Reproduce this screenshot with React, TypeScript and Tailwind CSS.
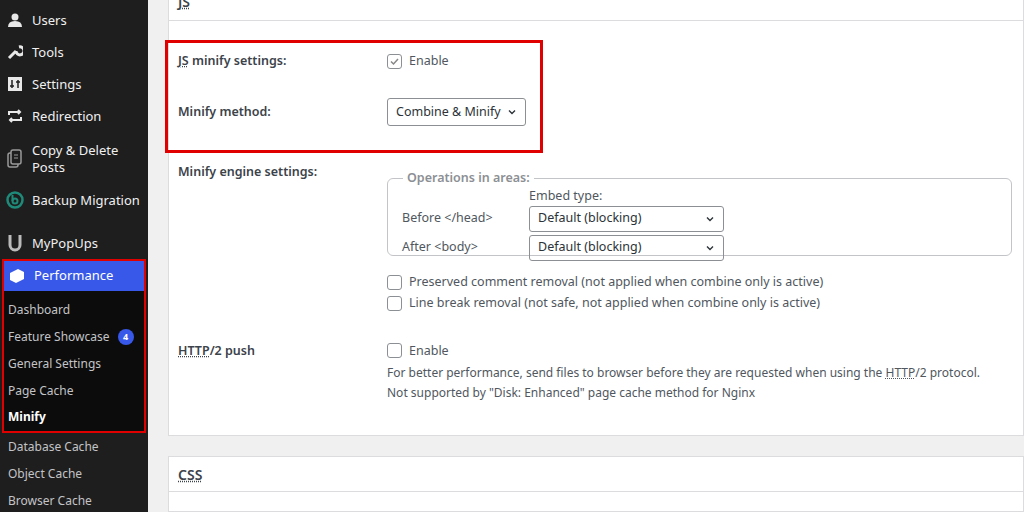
const font = { fontFamily: '"Noto Sans", "Open Sans", sans-serif' };

function Chevron() {
  return (
    <svg width="10" height="10" viewBox="0 0 10 10" className="shrink-0">
      <path d="M2 3.5 L5 6.5 L8 3.5" fill="none" stroke="#2c3338" strokeWidth="1.4" />
    </svg>
  );
}

function Box({ checked }: { checked?: boolean }) {
  return (
    <span className="w-[15px] h-[15px] border border-[#8c8f94] rounded-[3px] bg-white flex items-center justify-center shrink-0">
      {checked && (
        <svg width="11" height="11" viewBox="0 0 11 11">
          <path d="M2 5.5 L4.5 8 L9 3" fill="none" stroke="#888" strokeWidth="1.5" />
        </svg>
      )}
    </span>
  );
}

function Side({ icon, label, h = 'h-[32px]' }: { icon: React.ReactNode; label: React.ReactNode; h?: string }) {
  return (
    <div className={`flex items-center gap-2 px-[6px] ${h} text-[13px] text-[#f0f0f1]`}>
      <span className="w-[18px] flex justify-center text-[#c3c4c7]">{icon}</span>
      <span className="leading-[17px]">{label}</span>
    </div>
  );
}

export default function App() {
  const sub = ['Dashboard', 'Feature Showcase', 'General Settings', 'Page Cache'];
  return (
    <div style={font} className="w-[1024px] h-[512px] flex bg-[#f0f0f1] overflow-hidden text-[#3c434a]">
      <div className="w-[148px] shrink-0 bg-[#1e1e1e] flex flex-col">
        <div className="pt-[4px]">
          <Side label="Users" icon={<svg width="16" height="16" viewBox="0 0 16 16"><circle cx="8" cy="5" r="3.5" fill="#e8e8e8"/><path d="M1 15 Q1 9 8 9 Q15 9 15 15Z" fill="#e8e8e8"/></svg>} />
          <Side label="Tools" icon={<svg width="16" height="16" viewBox="0 0 16 16"><path d="M2 14 L9 7 M9 7 A4 4 0 1 0 12 3" stroke="#e8e8e8" strokeWidth="3" fill="none"/></svg>} />
          <Side label="Settings" icon={<svg width="16" height="16" viewBox="0 0 16 16"><rect x="1" y="1" width="14" height="14" fill="#e8e8e8"/><path d="M5 4v8M11 4v8M3 10h4M9 6h4" stroke="#1e1e1e" strokeWidth="1.5"/></svg>} />
          <Side label="Redirection" icon={<svg width="16" height="16" viewBox="0 0 16 16"><path d="M2 7V4h11M11 2l2 2-2 2M14 9v3H3M5 10l-2 2 2 2" stroke="#e8e8e8" strokeWidth="2" fill="none"/></svg>} />
          <div className="h-[5px]" />
          <Side h="h-[44px]" label={<>Copy &amp; Delete<br />Posts</>} icon={<svg width="18" height="20" viewBox="0 0 18 20"><rect x="2" y="4" width="10" height="14" rx="2" stroke="#999" fill="none" strokeWidth="1.5"/><rect x="5" y="1" width="10" height="14" rx="2" stroke="#999" fill="#1e1e1e" strokeWidth="1.5"/><path d="M8 6h4M8 9h4" stroke="#999"/></svg>} />
          <Side h="h-[38px]" label="Backup Migration" icon={<svg width="18" height="18" viewBox="0 0 18 18"><circle cx="9" cy="9" r="7.5" stroke="#1e8a7a" strokeWidth="2.5" fill="none"/><circle cx="9" cy="10" r="2.5" stroke="#1e8a7a" strokeWidth="2" fill="none"/><path d="M6.5 4v6" stroke="#1e8a7a" strokeWidth="2"/></svg>} />
          <div className="h-[6px]" />
          <Side h="h-[36px]" label="MyPopUps" icon={<svg width="14" height="18" viewBox="0 0 14 18"><path d="M2 1v10a5 5 0 0 0 10 0V1" stroke="#bbb" strokeWidth="3" fill="none"/></svg>} />
        </div>
        <div className="mx-[2px] border-2 border-[#e00000] mt-[-2px]">
          <div className="relative h-[30px] bg-[#3858e9] flex items-center gap-2 px-[4px] text-[13px] text-white">
            <svg width="18" height="16" viewBox="0 0 18 16"><path d="M2 5 L10 1 L16 4 L16 11 L8 15 L2 12Z" fill="#fff"/></svg>
            <span>Performance</span>
            <span className="absolute right-[-14px] top-[8px] w-0 h-0 border-y-[7px] border-y-transparent border-r-[7px] border-r-[#f0f0f1]" />
          </div>
          <div className="bg-[#0c0c0c] pt-[5px] pb-[2px] text-[12px] text-[#c3c4c7]">
            {sub.map((s) => (
              <div key={s} className="h-[27px] flex items-center px-[4px] gap-2">
                {s}
                {s === 'Feature Showcase' && (
                  <span className="w-[16px] h-[16px] rounded-full bg-[#3858e9] text-white text-[9px] font-bold flex items-center justify-center">4</span>
                )}
              </div>
            ))}
            <div className="h-[25px] flex items-center px-[4px] text-white font-bold">Minify</div>
          </div>
        </div>
        <div className="text-[12px] text-[#c3c4c7] px-[8px]">
          {['Database Cache', 'Object Cache', 'Browser Cache'].map((s) => (
            <div key={s} className="h-[27px] flex items-center">{s}</div>
          ))}
        </div>
      </div>

      <div className="flex-1 pl-[20px] flex flex-col gap-[20px] mt-[-12px]">
        <div className="bg-white border border-[#dcdcde] h-[448px] flex flex-col text-[12.5px]">
          <div className="h-[32px] border-b border-[#dcdcde] flex items-end pb-[8px] px-[9px] text-[14px] font-semibold">
            <span className="underline decoration-dotted">JS</span>
          </div>
          <div className="mt-[19px] ml-[-4px] w-[378px] h-[113px] border-[3px] border-[#e00000] px-[10px] pt-[8px]">
            <div className="flex items-center h-[20px]">
              <span className="w-[209px] font-semibold"><span className="underline decoration-dotted">JS</span> minify settings:</span>
              <Box checked />
              <span className="ml-[7px] text-[#50575e]">Enable</span>
            </div>
            <div className="flex items-center mt-[27px]">
              <span className="w-[209px] font-semibold">Minify method:</span>
              <div className="w-[139px] h-[28px] border border-[#8c8f94] rounded-[3px] flex items-center justify-between px-[8px] text-[#2c3338]">
                Combine &amp; Minify <Chevron />
              </div>
            </div>
          </div>
          <div className="flex px-[9px] mt-[7px]">
            <span className="w-[209px] font-semibold pt-[3px]">Minify engine settings:</span>
            <div className="flex-1 flex flex-col">
              <fieldset className="mt-[9px] border border-[#c3c4c7] rounded-[6px] px-[14px] h-[87px] mr-[2px]">
                <legend className="px-[4px] ml-[1px] text-[#8c8f94] font-semibold">Operations in areas:</legend>
                <div className="pl-[127px] text-[#50575e] leading-[14px] mt-[1px]">Embed type:</div>
                <div className="flex items-center mt-[3px]">
                  <span className="w-[127px] text-[#50575e]">Before &lt;/head&gt;</span>
                  <div className="w-[195px] h-[26px] border border-[#8c8f94] rounded-[3px] flex items-center justify-between px-[8px] text-[#2c3338]">Default (blocking)<Chevron /></div>
                </div>
                <div className="flex items-center mt-[3px]">
                  <span className="w-[127px] text-[#50575e]">After &lt;body&gt;</span>
                  <div className="w-[195px] h-[26px] border border-[#8c8f94] rounded-[3px] flex items-center justify-between px-[8px] text-[#2c3338]">Default (blocking)<Chevron /></div>
                </div>
              </fieldset>
              <div className="flex items-center gap-[7px] mt-[17px] text-[#50575e]"><Box />Preserved comment removal (not applied when combine only is active)</div>
              <div className="flex items-center gap-[7px] mt-[2px] text-[#50575e]"><Box />Line break removal (not safe, not applied when combine only is active)</div>
            </div>
          </div>
          <div className="flex px-[9px] mt-[29px]">
            <span className="w-[209px] font-semibold"><span className="underline decoration-dotted">HTTP</span>/2 push</span>
            <div className="flex flex-col text-[#50575e]">
              <div className="flex items-center gap-[7px]"><Box />Enable</div>
              <div className="mt-[3px] leading-[20px] text-[12px] whitespace-nowrap">For better performance, send files to browser before they are requested when using the <span className="underline decoration-dotted">HTTP</span>/2 protocol.</div>
              <div className="leading-[20px] text-[12px]">Not supported by "Disk: Enhanced" page cache method for Nginx</div>
            </div>
          </div>
        </div>
        <div className="bg-white border border-[#dcdcde] flex-1 flex flex-col">
          <div className="h-[35px] border-b border-[#dcdcde] flex items-center px-[9px] text-[14px] font-semibold">
            <span className="underline decoration-dotted">CSS</span>
          </div>
        </div>
      </div>
    </div>
  );
}
